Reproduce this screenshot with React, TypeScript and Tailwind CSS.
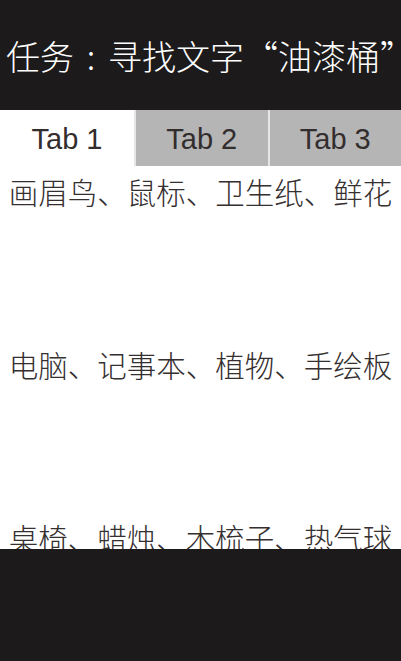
export default function App() {
  const tabs = ['Tab 1', 'Tab 2', 'Tab 3'];
  const rows = [
    '画眉鸟、鼠标、卫生纸、鲜花',
    '电脑、记事本、植物、手绘板',
    '桌椅、蜡烛、木梳子、热气球',
  ];

  return (
    <div className="flex h-[661px] w-[401px] flex-col overflow-hidden bg-white font-['Noto_Sans_CJK_SC',sans-serif] font-light">
      <header className="flex h-[110px] shrink-0 items-center bg-[#1c1a1b] pl-[6px] pt-[1px] text-[34px] leading-none text-white">
        <span className="whitespace-nowrap">
          任务<span className="inline-block w-[34px] text-center">:</span>寻找文字
          <span className="inline-block w-[34px] pr-[3px] text-right">“</span>油漆桶
          <span className="inline-block w-[14px] text-right">”</span>
        </span>
      </header>
      <div className="flex h-[56px] shrink-0">
        {tabs.map((tab, i) => (
          <div
            key={tab}
            className={
              i === 0
                ? "flex w-[134px] items-center justify-center bg-white pt-[3px] font-['Liberation_Sans',sans-serif] text-[29px] font-normal text-[#332d2e]"
                : "flex flex-1 items-center justify-center border-l-2 border-[#e6e6e6] bg-[#b5b5b5] pt-[3px] font-['Liberation_Sans',sans-serif] text-[29px] font-normal text-[#332d2e]"
            }
          >
            {tab}
          </div>
        ))}
      </div>
      <main className="flex h-[383px] shrink-0 flex-col items-center gap-[143px] overflow-hidden pt-[10px] text-[29.5px] leading-[30px] text-[#352f30]">
        {rows.map((row) => (
          <p key={row} className="whitespace-nowrap">
            {row}
          </p>
        ))}
      </main>
      <footer className="h-[112px] shrink-0 bg-[#1c1a1b]" />
    </div>
  );
}
